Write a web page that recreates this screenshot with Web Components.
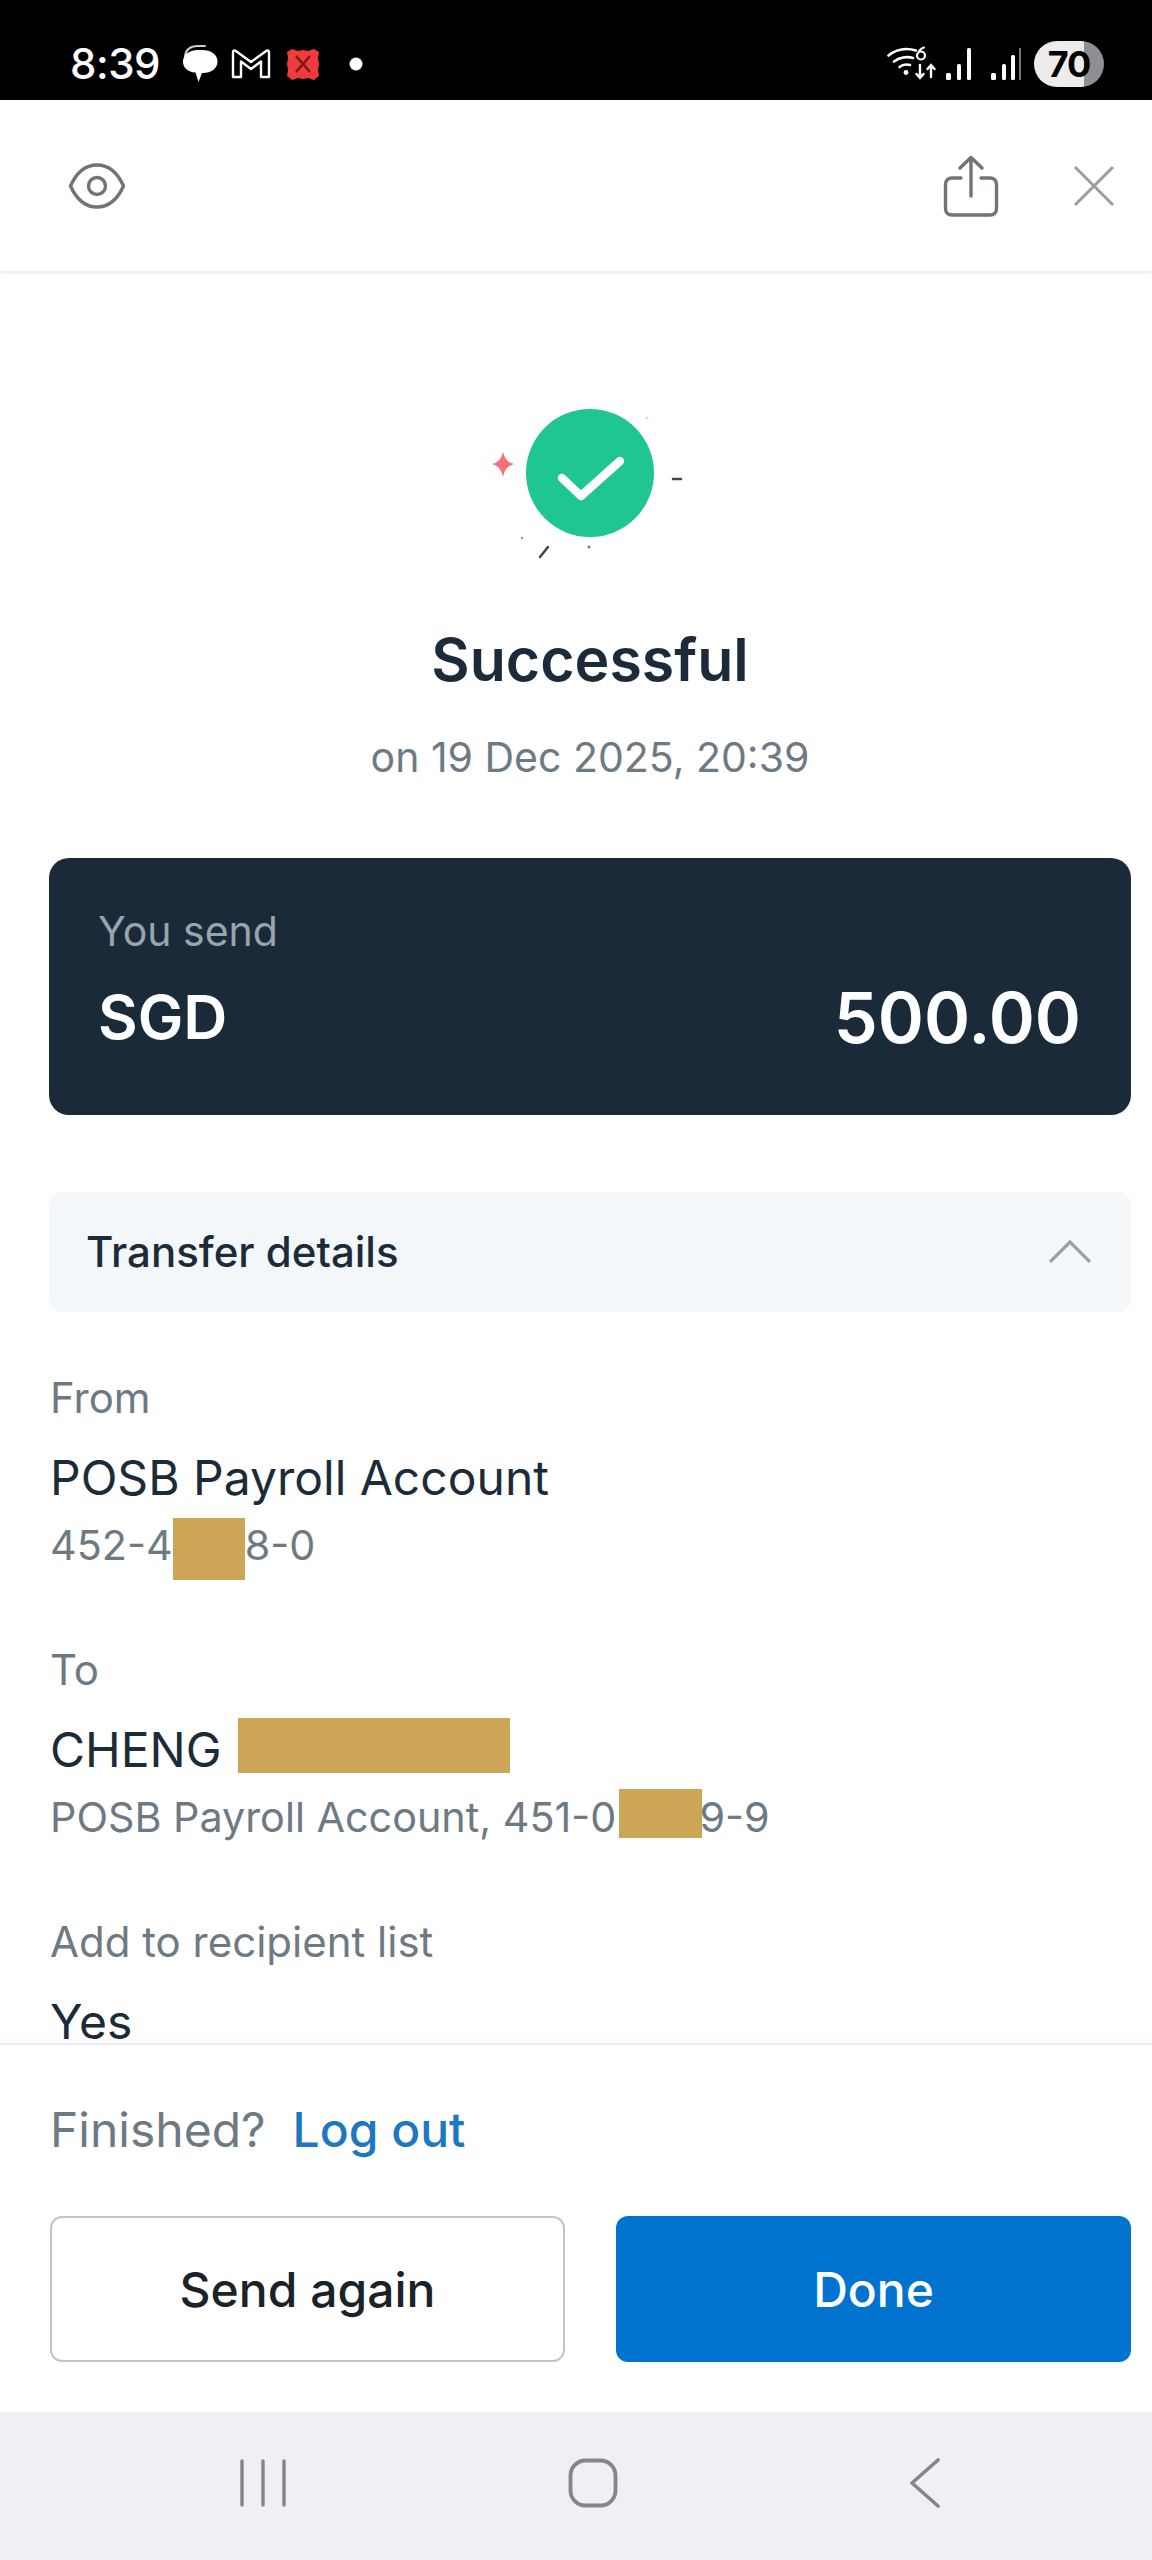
<!DOCTYPE html>
<html>
<head>
<meta charset="utf-8">
<title>Transfer successful</title>
<style>
  html, body { margin: 0; padding: 0; background: #fff; }
  body { font-family: Inter, "Liberation Sans", sans-serif; width: 1152px; height: 2560px; overflow: hidden; }
</style>
</head>
<body>
<transfer-screen>
  <status-bar slot="top"></status-bar>
  <receipt-header slot="top"></receipt-header>

  <success-banner title-text="Successful" date-text="on 19 Dec 2025, 20:39"></success-banner>
  <amount-card label="You send" currency="SGD" amount="500.00"></amount-card>
  <details-toggle>Transfer details</details-toggle>

  <details-list>
    <detail-item label="From">
      POSB Payroll Account
      <span slot="sub">452-4<redact-mask w="72" h="62"></redact-mask>8-0</span>
    </detail-item>
    <detail-item label="To">
      CHENG <redact-mask w="272" h="55" dx="3" dy="-8"></redact-mask>
      <span slot="sub">POSB Payroll Account, 451-0<redact-mask w="83" h="49" dx="3" dy="-7" style="margin-right:-3px"></redact-mask>9-9</span>
    </detail-item>
    <detail-item label="Add to recipient list">Yes</detail-item>
  </details-list>

  <action-footer slot="bottom"></action-footer>
  <nav-bar slot="bottom"></nav-bar>
</transfer-screen>

<script>
  class TransferScreen extends HTMLElement {
    constructor() {
      super();
      this.attachShadow({ mode: 'open' });
      this.shadowRoot.innerHTML = `
<style>
  :host { display: flex; flex-direction: column; width: 1152px; height: 2560px; color: #1b2b3a; }
  .scroll { flex: 1; min-height: 0; overflow: hidden; }
</style>
<slot name="top"></slot>
<div class="scroll"><slot></slot></div>
<slot name="bottom"></slot>
      `;
    }
  }

  class StatusBar extends HTMLElement {
    constructor() {
      super();
      this.attachShadow({ mode: 'open' });
      this.shadowRoot.innerHTML = `
<style>
  :host { display: flex; align-items: center; height: 100px; padding: 28px 48px 0 70px; background: #000; color: #fff; box-sizing: border-box; }
  .time { font-size: 42px; font-weight: 500; line-height: 50px; margin-right: 23px; width: 89px; letter-spacing: -0.5px; }
  svg { display: block; flex: none; }
  .left { display: flex; align-items: center; }
  .right { margin-left: auto; display: flex; align-items: center; }
  .battery { position: relative; width: 70px; height: 46px; border-radius: 23px; margin-left: 13px; overflow: hidden;
    background: linear-gradient(90deg, #ececec 0 72%, #8f8f8f 72% 100%); color: #000; font-size: 36px; font-weight: 700; line-height: 46px; text-align: center; letter-spacing: -1px; }
</style>
<div class="left">
  <span class="time">8:39</span>
  <svg width="36" height="40" viewBox="0 0 36 40" style="margin-right:13px">
    <path d="M3 12C4 5 9 2 16 2h7" stroke="#d0d0d0" stroke-width="2" fill="none" stroke-linecap="round"/>
    <path d="M16 6h4c9 0 15.500 4.500 15.500 11.500S29 29 21 29h-1l-3.500 9-3-9.500C6 28 1 24 1 17.500S7 6 16 6z" fill="#fff"/>
  </svg>
  <svg width="40" height="32" viewBox="0 0 40 32" style="margin-right:15px">
    <path d="M2 29V4c0-1.500 1.500-2 2.500-1.200L20 14 35.500 2.800C36.500 2 38 2.500 38 4v25h-8V13.500L20 21 10 13.500V29z" fill="none" stroke="#fff" stroke-width="2.400" stroke-linejoin="round"/>
  </svg>
  <svg width="34" height="32" viewBox="0 0 34 32" style="margin-right:29px">
    <path d="M1 4 6 1l6 2 5-1 5 1 6-2 5 3-1 6 1 6-1 6 1 6-5 4-6-2-5 1-5-1-6 2-5-4 1-6-1-6 1-6z" fill="#ef3b3b"/>
    <path d="M10 8 24 24M24 8 10 24" stroke="#7a1616" stroke-width="2.400"/>
  </svg>
  <svg width="14" height="14" viewBox="0 0 14 14"><circle cx="7" cy="7" r="6.500" fill="#fff"/></svg>
</div>
<div class="right">
  <svg width="50" height="36" viewBox="0 0 50 36" style="margin-right:8px">
    <g fill="none" stroke="#fff" stroke-width="2.600" stroke-linecap="round">
      <path d="M1.500 9.500C9 3.500 19 1.500 29 4.500"/>
      <path d="M7 15.500C12 11.500 20 10 26 12"/>
      <path d="M12.500 21c3-2.500 7-3 10.500-2"/>
      <circle cx="34" cy="9.500" r="4" stroke-width="2.200"/>
      <path d="M37 1.500c-2 .5-5 3-6 6" stroke-width="2"/>
      <path d="M33 19v13M29.500 28l3.500 4 3.500-4M44 31V19M40.500 23l3.500-4 3.500 4" stroke-width="2.400"/>
    </g>
    <circle cx="19" cy="26.500" r="2.400" fill="#fff"/>
  </svg>
  <svg width="32" height="34" viewBox="0 0 32 34" style="margin-right:14px">
    <rect x="1" y="26" width="5" height="7" rx="1.500" fill="#fff"/>
    <rect x="12" y="17" width="4" height="16" rx="1.500" fill="#fff"/>
    <rect x="22" y="1" width="4" height="32" rx="1.500" fill="#fff"/>
  </svg>
  <svg width="30" height="34" viewBox="0 0 30 34">
    <rect x="0" y="26" width="5" height="7" rx="1.500" fill="#fff"/>
    <rect x="11" y="17" width="4" height="16" rx="1.500" fill="#fff"/>
    <rect x="20" y="8" width="4" height="25" rx="1.500" fill="#fff"/>
    <rect x="28" y="1" width="2" height="32" fill="#777"/>
  </svg>
  <div class="battery">70</div>
</div>
      `;
    }
  }

  class ReceiptHeader extends HTMLElement {
    constructor() {
      super();
      this.attachShadow({ mode: 'open' });
      this.shadowRoot.innerHTML = `
<style>
  :host { display: flex; align-items: center; height: 173px; box-sizing: border-box; padding: 0 37px 0 68px; background: #fff; border-bottom: 2px solid #eeeff0; box-shadow: 0 2px 4px rgba(0,0,0,.03); }
  svg { display: block; flex: none; }
  .share { margin-left: auto; margin-right: 74px; }
</style>
<svg width="58" height="46" viewBox="0 0 58 46" fill="none" stroke="#6f7479" stroke-width="3.400">
  <path d="M2.500 23C9 8.500 19 2 29 2s20 6.500 26.500 21C49 37.500 39 44 29 44S9 37.500 2.500 23z" stroke-linejoin="round"/>
  <circle cx="29" cy="23" r="8.500"/>
</svg>
<svg class="share" width="56" height="62" viewBox="0 0 56 62" fill="none" stroke="#6f7479" stroke-width="3.400" stroke-linecap="round" stroke-linejoin="round">
  <path d="M18 23H9c-4 0-6.500 2.500-6.500 6.500v24C2.500 57.500 5 60 9 60h38c4 0 6.500-2.500 6.500-6.500v-24c0-4-2.500-6.500-6.500-6.500h-9"/>
  <path d="M28 41V3M17 13 28 2.500 39 13"/>
</svg>
<svg width="42" height="42" viewBox="0 0 42 42" fill="none" stroke="#9a9da0" stroke-width="3">
  <path d="M2 2l38 38M40 2 2 40"/>
</svg>
      `;
    }
  }

  class SuccessBanner extends HTMLElement {
    constructor() {
      super();
      this.attachShadow({ mode: 'open' });
      this.shadowRoot.innerHTML = `
<style>
  :host { display: block; padding: 107px 21px 0 49px; text-align: center; }
  svg { display: block; margin: 0 auto; }
  h1 { margin: 45px 0 0; font-size: 59px; font-weight: 600; line-height: 70px; color: #1b2b3a; }
  p { margin: 37px 0 0; font-size: 41px; font-weight: 400; line-height: 50px; color: #6e7a83; }
</style>
<svg width="280" height="200" viewBox="450 380 280 200">
  <circle cx="590" cy="473" r="64" fill="#1fc592"/>
  <path d="M562 478l19 18 39-35" fill="none" stroke="#fff" stroke-width="8.500" stroke-linecap="round" stroke-linejoin="round"/>
  <path d="M503 452q2 10 11 12q-9 2-11 13q-2-11-11-13q9-2 11-12z" fill="#f86f78"/>
  <path d="M673 479h8" stroke="#444" stroke-width="2.500" stroke-linecap="round"/>
  <path d="M540 557l8-10" stroke="#444" stroke-width="2.500" stroke-linecap="round"/>
  <circle cx="589" cy="547" r="1.500" fill="#777"/>
  <circle cx="522" cy="538" r="1.200" fill="#999"/>
  <circle cx="647" cy="418" r="1.500" fill="#ddd"/>
</svg>
<h1></h1>
<p></p>
      `;
    }
    connectedCallback() {
      this.shadowRoot.querySelector('h1').textContent = this.getAttribute('title-text');
      this.shadowRoot.querySelector('p').textContent = this.getAttribute('date-text');
    }
  }

  class AmountCard extends HTMLElement {
    constructor() {
      super();
      this.attachShadow({ mode: 'open' });
      this.shadowRoot.innerHTML = `
<style>
  :host { display: block; box-sizing: border-box; height: 257px; margin: 76px 21px 0 49px; padding: 48px 50px 0 49px; border-radius: 20px; background: #1a2a38; color: #fff; }
  .label { font-size: 41px; line-height: 50px; color: #98a4ae; }
  .row { display: flex; justify-content: space-between; align-items: center; height: 80px; margin-top: 21px; font-weight: 600; }
  .cur { font-size: 61px; }
  .amt { font-size: 70px; }
</style>
<div class="label"></div>
<div class="row"><span class="cur"></span><span class="amt"></span></div>
      `;
    }
    connectedCallback() {
      this.shadowRoot.querySelector('.label').textContent = this.getAttribute('label');
      this.shadowRoot.querySelector('.cur').textContent = this.getAttribute('currency');
      this.shadowRoot.querySelector('.amt').textContent = this.getAttribute('amount');
    }
  }

  class DetailsToggle extends HTMLElement {
    constructor() {
      super();
      this.attachShadow({ mode: 'open' });
      this.shadowRoot.innerHTML = `
<style>
  :host { display: flex; align-items: center; justify-content: space-between; box-sizing: border-box; height: 120px; margin: 77px 21px 0 49px; padding: 0 39px 2px 37px; border-radius: 14px; background: #f4f7f9; font-size: 42px; font-weight: 500; color: #1b2b3a; }
  svg { display: block; }
</style>
<span><slot></slot></span>
<svg width="44" height="24" viewBox="0 0 44 24" fill="none" stroke="#9aa1a6" stroke-width="3.200"><path d="M2 23 22 3l20 20"/></svg>
      `;
    }
  }

  class DetailsList extends HTMLElement {
    constructor() {
      super();
      this.attachShadow({ mode: 'open' });
      this.shadowRoot.innerHTML = `
<style>
  :host { display: flex; flex-direction: column; gap: 69px; margin: 58px 21px 0 50px; }
</style>
<slot></slot>
      `;
    }
  }

  class DetailItem extends HTMLElement {
    constructor() {
      super();
      this.attachShadow({ mode: 'open' });
      this.shadowRoot.innerHTML = `
<style>
  :host { display: block; }
  .label { font-size: 42px; line-height: 56px; color: #6e7a83; }
  .value { margin-top: 22px; font-size: 48px; font-weight: 430; line-height: 60px; color: #1b2b3a; }
  .sub { margin-top: 9px; font-size: 41.3px; line-height: 56px; color: #6e7a83; }
</style>
<div class="label"></div>
<div class="value"><slot></slot></div>
<div class="sub"><slot name="sub"></slot></div>
      `;
    }
    connectedCallback() {
      this.shadowRoot.querySelector('.label').textContent = this.getAttribute('label');
    }
  }

  // gold block covering part of a name or account number, sits inline with the text
  class RedactMask extends HTMLElement {
    constructor() {
      super();
      this.attachShadow({ mode: 'open' });
      this.shadowRoot.innerHTML = `
<style>
  :host { display: inline-block; position: relative; vertical-align: middle; margin: -20px 0; background: #cca656; }
</style>
      `;
    }
    connectedCallback() {
      this.style.width = this.getAttribute('w') + 'px';
      this.style.height = this.getAttribute('h') + 'px';
      if (this.hasAttribute('dx')) this.style.marginLeft = this.getAttribute('dx') + 'px';
      if (this.hasAttribute('dy')) this.style.top = this.getAttribute('dy') + 'px';
    }
  }

  class ActionFooter extends HTMLElement {
    constructor() {
      super();
      this.attachShadow({ mode: 'open' });
      this.shadowRoot.innerHTML = `
<style>
  :host { display: block; box-sizing: border-box; height: 369px; padding: 55px 21px 0 50px; background: #fff; border-top: 2px solid #eceded; box-shadow: 0 -6px 10px rgba(0,0,0,.025); position: relative; }
  .line { display: flex; gap: 27px; font-size: 48px; line-height: 60px; color: #6e7a83; }
  .line a { color: #1d78c1; font-weight: 500; }
  .btns { display: grid; grid-template-columns: 1fr 1fr; gap: 51px; margin-top: 56px; }
  .btn { display: flex; align-items: center; justify-content: center; height: 146px; box-sizing: border-box; border-radius: 12px; font-size: 48px; font-weight: 500; }
  .ghost { background: #fff; border: 2px solid #c2c4c6; color: #1b2328; }
  .solid { background: #0073cf; color: #fff; }
</style>
<div class="line"><span>Finished?</span><a>Log out</a></div>
<div class="btns">
  <div class="btn ghost">Send again</div>
  <div class="btn solid">Done</div>
</div>
      `;
    }
  }

  class NavBar extends HTMLElement {
    constructor() {
      super();
      this.attachShadow({ mode: 'open' });
      this.shadowRoot.innerHTML = `
<style>
  :host { display: grid; grid-template-columns: 240px 46px 282px 50px 292px 32px; align-items: center; height: 148px; padding-bottom: 6px; box-sizing: border-box; background: #f0f0f4; }
  svg { display: block; }
</style>
<span></span>
<svg style="grid-column:2" width="46" height="48" viewBox="0 0 46 48" fill="none" stroke="#85858a" stroke-width="3.400" stroke-linecap="round">
  <path d="M2 2v44M23 2v44M44 2v44"/>
</svg>
<svg style="grid-column:4" width="50" height="50" viewBox="0 0 50 50" fill="none" stroke="#85858a" stroke-width="3.800">
  <rect x="2.500" y="2.500" width="45" height="45" rx="15"/>
</svg>
<svg style="grid-column:6" width="32" height="50" viewBox="0 0 32 50" fill="none" stroke="#85858a" stroke-width="3.600" stroke-linecap="round" stroke-linejoin="round">
  <path d="M28 2 2 25l26 23"/>
</svg>
      `;
    }
  }

  customElements.define('transfer-screen', TransferScreen);
  customElements.define('status-bar', StatusBar);
  customElements.define('receipt-header', ReceiptHeader);
  customElements.define('success-banner', SuccessBanner);
  customElements.define('amount-card', AmountCard);
  customElements.define('details-toggle', DetailsToggle);
  customElements.define('details-list', DetailsList);
  customElements.define('detail-item', DetailItem);
  customElements.define('redact-mask', RedactMask);
  customElements.define('action-footer', ActionFooter);
  customElements.define('nav-bar', NavBar);
</script>
</body>
</html>
